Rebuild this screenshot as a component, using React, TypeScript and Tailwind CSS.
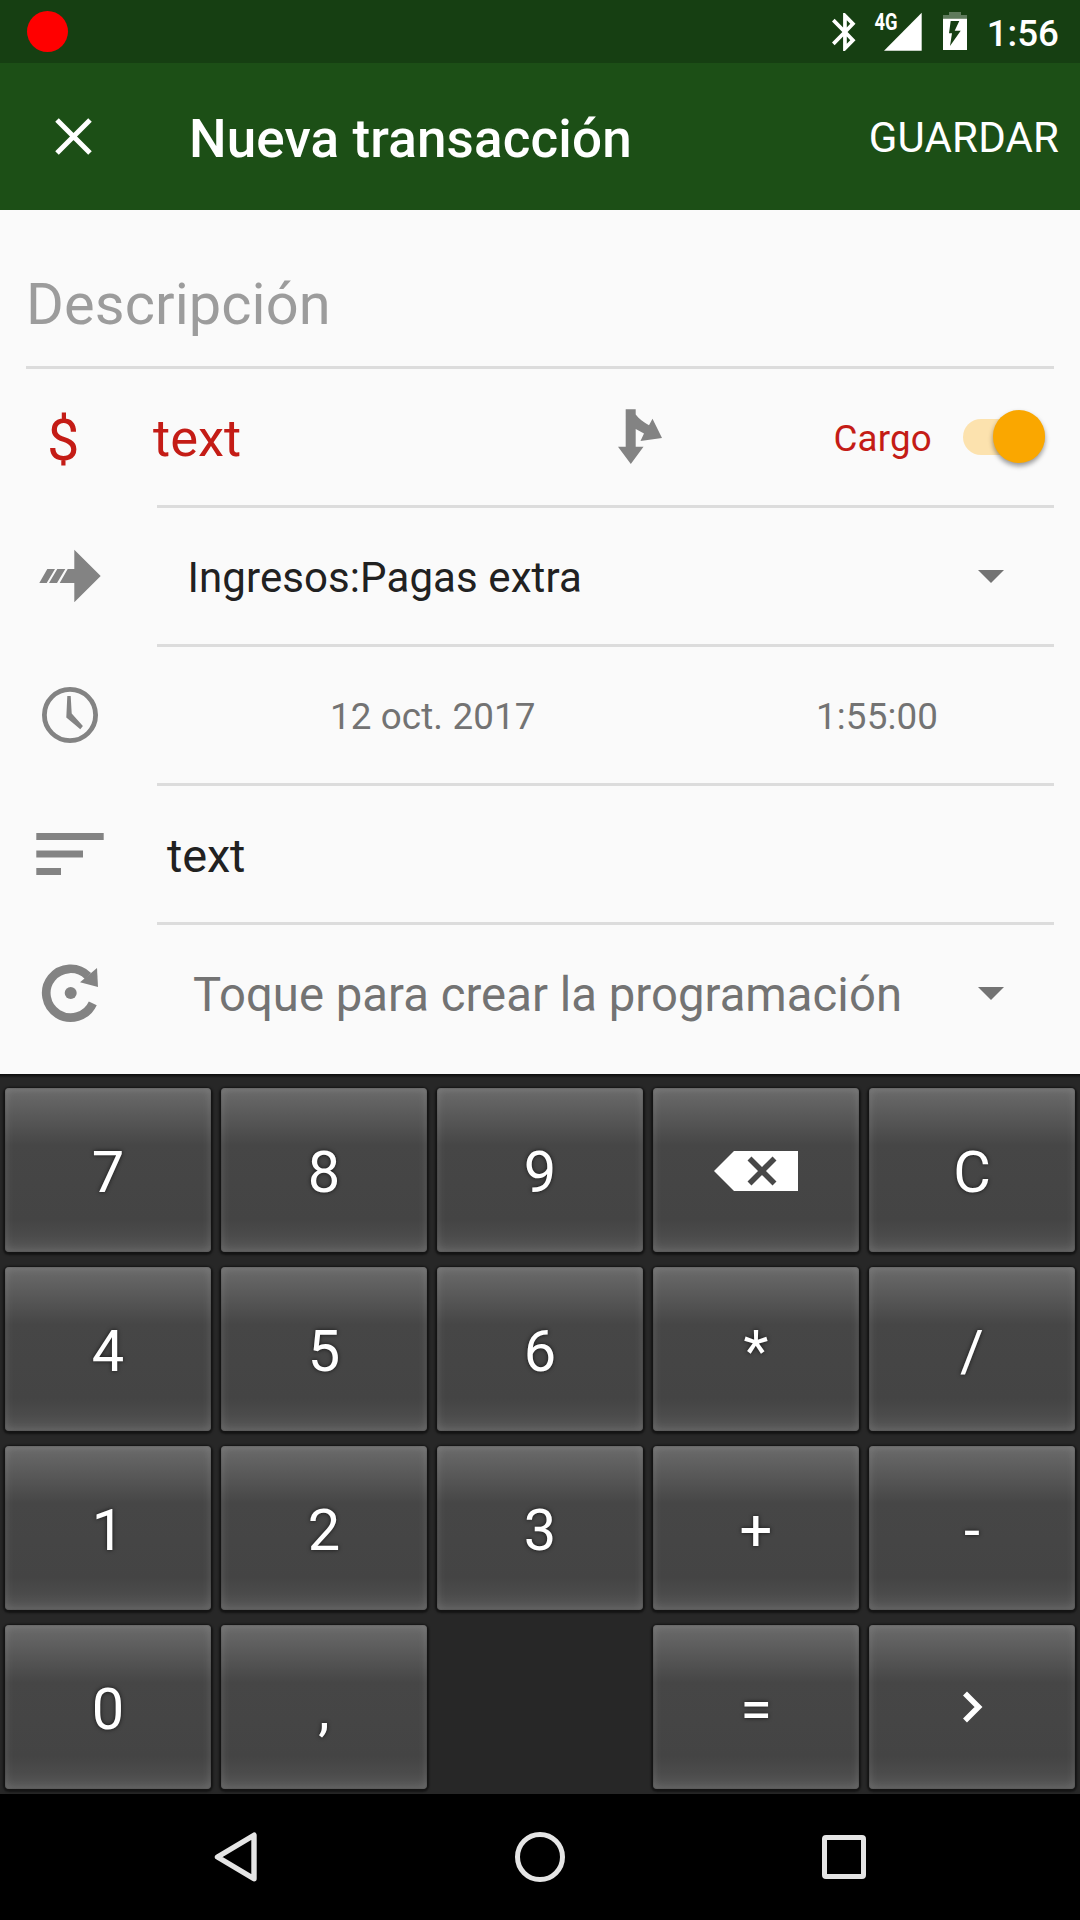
import type { ReactNode } from 'react';

const Caret = () => (
  <svg className="mr-[49.7px] mb-[3px] h-[13px] w-[26px]" viewBox="0 0 26 13">
    <path d="M0 0H26L13 13Z" fill="#737373" />
  </svg>
);

function FormRow({ icon, children, last = false }: { icon: ReactNode; children: ReactNode; last?: boolean }) {
  return (
    <div className="flex h-[139px]">
      <div className="w-[157px] shrink-0">{icon}</div>
      <div
        className={
          last
            ? 'mr-[26px] flex flex-1 items-center pt-1 pb-[3px]'
            : 'mr-[26px] flex flex-1 items-center border-b-[3px] border-[#dcdcdc] pt-1'
        }
      >
        {children}
      </div>
    </div>
  );
}

const Backspace = () => (
  <svg className="mt-[2px] h-[40px] w-[84px]" viewBox="0 0 84 40">
    <path d="M0 20L20 0H84V40H20Z" fill="#fff" />
    <path d="M35.5 7.5L60.5 32.5M60.5 7.5L35.5 32.5" stroke="#484848" strokeWidth="5.6" />
  </svg>
);

const Chevron = () => (
  <svg className="-mt-[1px] ml-[2px] h-[32px] w-[20px]" viewBox="0 0 20 32">
    <path d="M2 2.5L15.5 16L2 29.5" fill="none" stroke="#fff" strokeWidth="5.6" />
  </svg>
);

const keys: (ReactNode | null)[] = [
  '7', '8', '9', <Backspace />, 'C',
  '4', '5', '6', '*', '/',
  '1', '2', '3', '+', '-',
  '0', ',', null, '=', <Chevron />,
];

function Key({ children }: { children: ReactNode }) {
  return (
    <button className="flex h-[164px] items-center justify-center rounded-[4px] bg-[linear-gradient(180deg,#6b6b6b_0%,#595959_17%,#464646_35%,#444444_80%,#4b4b4b_90%,#595959_100%)] text-[57.75px] leading-[60px] text-white shadow-[inset_0_0_9px_1px_rgba(255,255,255,0.13),inset_0_0_1px_1px_rgba(0,0,0,0.12),0_1px_2px_2px_rgba(0,0,0,0.5)]">
      {typeof children === 'string' ? (
        <span className="mt-[3px] [text-shadow:0_0_4px_rgba(0,0,0,0.7)]">{children}</span>
      ) : (
        children
      )}
    </button>
  );
}

export default function App() {
  return (
    <div className="flex h-[1920px] w-[1080px] flex-col overflow-hidden bg-[#fafafa] font-['Roboto',sans-serif]">
      <div className="flex h-[63px] shrink-0 items-start bg-[#163f12] text-white">
        <div className="mt-[11px] ml-[27px] size-[41px] rounded-full bg-[#ff0000]" />
        <div className="flex-1" />
        <svg className="mt-[12.5px] h-[38px] w-[23.5px]" viewBox="5 2 12.71 20" preserveAspectRatio="none">
          <path
            fill="#fff"
            d="M17.71 7.71L12 2h-1v7.59L6.41 5 5 6.41 10.59 12 5 17.59 6.41 19 11 14.41V22h1l5.71-5.71-4.3-4.29 4.3-4.29zM13 5.83l1.88 1.88L13 9.59V5.83zm1.88 10.46L13 18.17v-3.76l1.88 1.88z"
          />
        </svg>
        <svg className="ml-[18px] h-[63px] w-[48px]" viewBox="874 0 48 63">
          <path d="M921.7 12.7V50.7H884Z" fill="#fff" />
          <text x="874.6" y="30" fill="#fff" fontSize="23" fontWeight="700" textLength="23" lengthAdjust="spacingAndGlyphs">
            4G
          </text>
        </svg>
        <svg className="ml-[21px] h-[63px] w-[24px]" viewBox="943 0 24 63">
          <path d="M949 12H961V15H967V18.7H943V15H949Z" fill="#5f7b5c" />
          <path d="M943 18.7H967V50H943Z" fill="#fff" />
          <path d="M950.7 21H959.3L954.7 30.7H960.7L950 46L952 33.3H949Z" fill="#163f12" />
        </svg>
        <span className="mt-[4px] mr-[21px] ml-[20px] text-[36.75px] leading-[60px] font-medium">1:56</span>
      </div>

      <header className="flex h-[147px] shrink-0 items-start bg-[#1c4f16] text-white">
        <svg className="mt-[55px] ml-[55px] h-[37px] w-[37px]" viewBox="0 0 37 37">
          <path d="M2 2L35 35M35 2L2 35" stroke="#fff" strokeWidth="5" />
        </svg>
        <h1 className="mt-[46px] ml-[97px] flex-1 text-[53px] leading-[60px] font-medium tracking-[0.13px]">Nueva transacción</h1>
        <button className="mt-[45px] mr-[21px] text-[42px] leading-[60px] tracking-[0.15px]">GUARDAR</button>
      </header>

      <main className="h-[864px] shrink-0">
        <div className="mx-[26px] h-[159px] border-b-[3px] border-[#dcdcdc] pt-[64px] text-[57.75px] leading-[60px] tracking-[0.1px] text-[#9c9c9c]">
          Descripción
        </div>

        <FormRow
          icon={<div className="pt-[41px] pl-[47px] text-[57.75px] leading-[60px] text-[#c41c16]">$</div>}
        >
          <span className="-ml-[4px] mb-[2px] text-[52.5px] leading-[60px] text-[#c41c16]">text</span>
          <div className="flex-1" />
          <svg className="mr-[171px] mb-[4px] h-[56px] w-[44px]" viewBox="618 409 44 56">
            <path
              d="M625.7 409.3H635.7V414.5C639 419 644 422.5 649 425.3L652.5 418.7L662 438L640.5 441L644 433.5L635.7 429V446.7H643.5L630.8 464L618 446.7H625.7Z"
              fill="#838383"
            />
          </svg>
          <span className="text-[36.75px] leading-[60px] tracking-[0.2px] text-[#c41c16]">Cargo</span>
          <div className="relative mr-[9px] mb-[4px] ml-[31px] h-[36px] w-[82px] rounded-full bg-[#fce2ae]">
            <div className="absolute -top-[9px] right-0 size-[52.5px] rounded-full bg-[#faa700] shadow-[0_3px_5px_rgba(0,0,0,0.4)]" />
          </div>
        </FormRow>

        <FormRow
          icon={
            <svg className="h-[139px] w-[157px]" viewBox="0 508 157 139" fill="#838383">
              <path d="M67.7 569H74.3V549.7L100.7 576L74.3 602.3V583H59.7Z" />
              <path d="M57.3 569H65.3L57 583H49ZM47.3 569H55L46.7 583H39.3Z" />
            </svg>
          }
        >
          <span className="ml-[30.5px] flex-1 text-[42px] leading-[60px] tracking-[0.09px] text-[#212121]">Ingresos:Pagas extra</span>
          <Caret />
        </FormRow>

        <FormRow
          icon={
            <svg className="h-[139px] w-[157px]" viewBox="0 647 157 139">
              <circle cx="70" cy="715" r="25.6" fill="none" stroke="#838383" strokeWidth="4.8" />
              <path d="M67.3 696H70.7L71.7 713.5L82.9 726L80.3 729.3L66.3 717.5Z" fill="#838383" />
            </svg>
          }
        >
          <span className="ml-[173px] flex-1 text-[36.75px] leading-[60px] tracking-[0.12px] text-[#737373]">12 oct. 2017</span>
          <span className="mr-[116px] text-[36.75px] leading-[60px] tracking-[0.12px] text-[#737373]">1:55:00</span>
        </FormRow>

        <FormRow
          icon={
            <svg className="h-[139px] w-[157px]" viewBox="0 786 157 139" fill="#838383">
              <path d="M36.3 833H103.7V840H36.3ZM36.3 850.5H83V857.5H36.3ZM36.3 868H61V875H36.3Z" />
            </svg>
          }
        >
          <span className="ml-[10px] text-[47px] leading-[60px] tracking-[-0.2px] text-[#212121]">text</span>
        </FormRow>

        <FormRow
          last
          icon={
            <svg className="h-[139px] w-[157px]" viewBox="0 925 157 139">
              <path d="M88 976A24.4 24.4 0 1 0 92.8 1003.4" fill="none" stroke="#838383" strokeWidth="8.7" />
              <path d="M97 968L98 987L80 982.3Z" fill="#838383" />
              <circle cx="70.7" cy="993" r="6" fill="#838383" />
            </svg>
          }
        >
          <span className="ml-[36px] flex-1 text-[47.25px] leading-[60px] tracking-[0.04px] text-[#737373]">
            Toque para crear la programación
          </span>
          <Caret />
        </FormRow>
      </main>

      <section className="grid h-[720px] shrink-0 grid-cols-5 content-start gap-x-[10px] gap-y-[15px] bg-[linear-gradient(180deg,#0c0c0c_0px,#191919_2px,#272727_4px)] px-[5px] pt-[14px]">
        {keys.map((k, i) => (k === null ? <div key={i} /> : <Key key={i}>{k}</Key>))}
      </section>

      <nav className="flex h-[126px] shrink-0 items-center bg-black">
        <svg className="ml-[214px] h-[50px] w-[44px]" viewBox="0 0 44 50">
          <path d="M3.5 25L40 3.2V46.8Z" fill="none" stroke="#e5e5e5" strokeWidth="5.4" strokeLinejoin="round" />
        </svg>
        <div className="ml-[257px] size-[50px] rounded-full border-[5.5px] border-[#e5e5e5]" />
        <div className="ml-[257px] size-[44px] rounded-[4px] border-[5.5px] border-[#e5e5e5]" />
      </nav>
    </div>
  );
}
